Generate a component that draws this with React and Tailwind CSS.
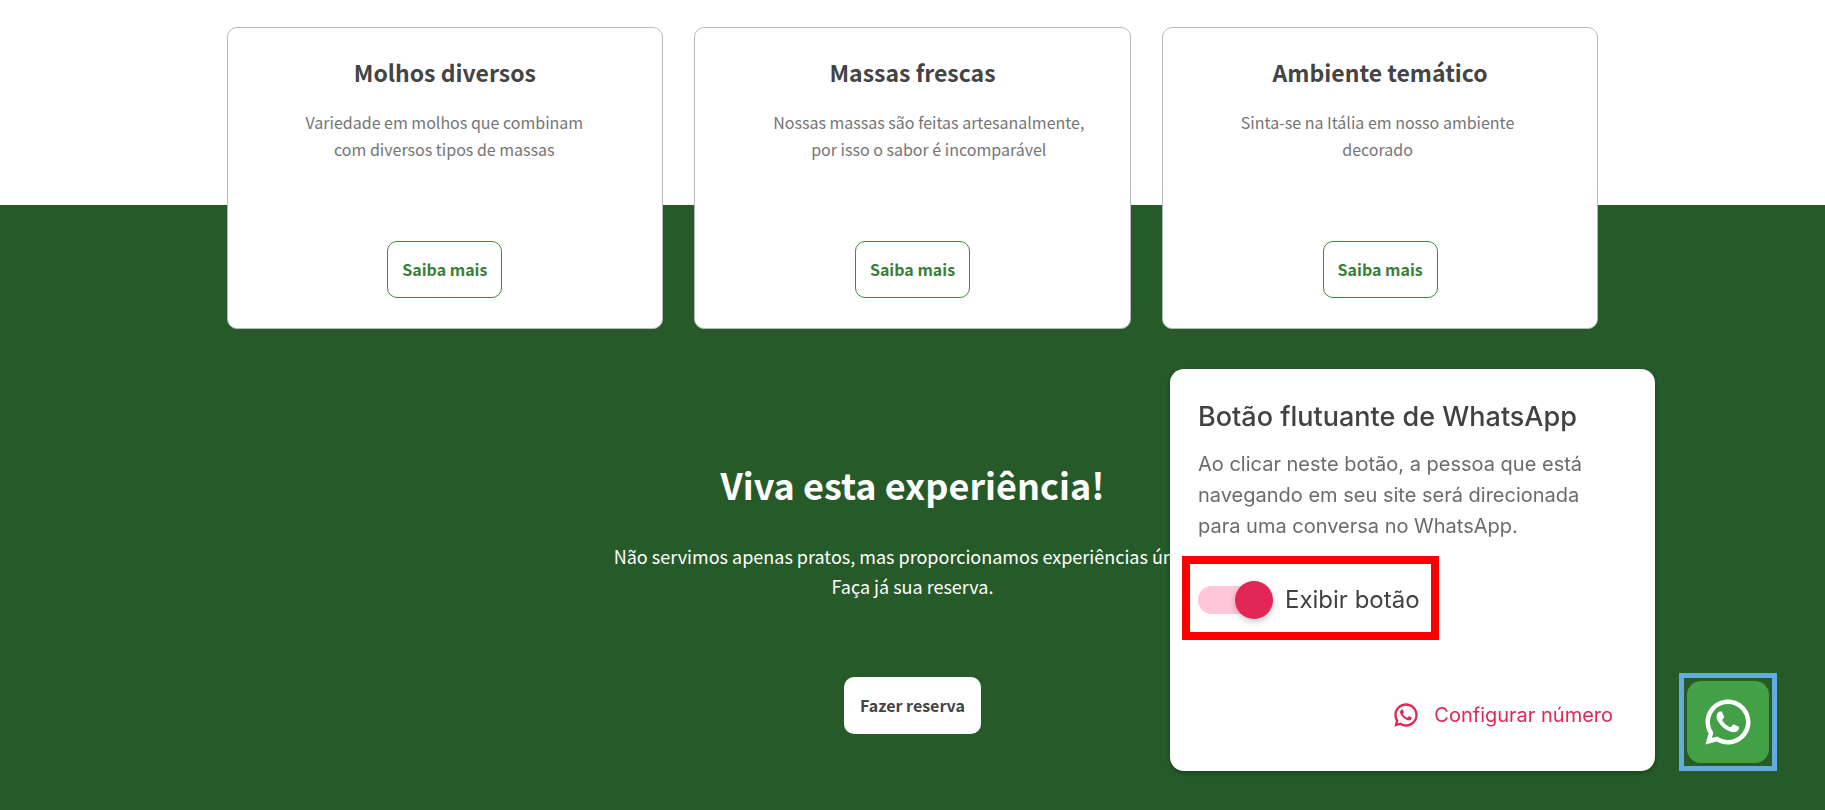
import React, { useState } from "react";
import { RiWhatsappLine } from "react-icons/ri";

const features = [
  { title: "Molhos diversos", lines: ["Variedade em molhos que combinam", "com diversos tipos de massas"] },
  { title: "Massas frescas", lines: ["Nossas massas são feitas artesanalmente,", "por isso o sabor é incomparável"] },
  { title: "Ambiente temático", lines: ["Sinta-se na Itália em nosso ambiente", "decorado"] },
];

function FeatureCard({ title, lines }) {
  return (
    <article className="flex flex-col items-center rounded-[10px] border border-[#b9b9c0] bg-white pt-[26px] pb-[30px]">
      <h3 className="text-[23px] leading-9 font-bold text-[#444]">{title}</h3>
      <div className="mt-[19px] w-full pl-[78px]">
        <p className="w-fit text-center text-base leading-[27px] text-[#757575]">
          {lines[0]}
          <br />
          {lines[1]}
        </p>
      </div>
      <button type="button" className="mt-[78px] rounded-[10px] border border-[#388e3c] px-[14px] py-4 text-base leading-[23px] font-bold text-[#388038]">
        Saiba mais
      </button>
    </article>
  );
}

function WhatsAppPanel() {
  const [visible, setVisible] = useState(true);
  return (
    <section className="w-[485px] rounded-[14px] bg-white px-7 pt-[30px] pb-[41px] font-['Inter',sans-serif] shadow-[0_2px_5px_rgba(0,0,0,0.3)]">
      <h2 className="text-[27px] leading-9 font-medium text-[#424242]">Botão flutuante de WhatsApp</h2>
      <p className="mt-[14px] text-xl leading-[31px] text-[#6b6b6b]">
        Ao clicar neste botão, a pessoa que está navegando em seu site será direcionada para uma conversa no WhatsApp.
      </p>
      <label className="mt-[14px] -ml-4 flex h-[84px] w-[257px] cursor-pointer items-center gap-3 border-8 border-[#ff0000] pt-1 pl-2 text-2xl text-[#424242]">
        <span className="relative flex h-[38px] w-[75px] items-center">
          <input
            type="checkbox"
            role="switch"
            checked={visible}
            onChange={(e) => setVisible(e.target.checked)}
            className="peer h-7 w-[70px] cursor-pointer appearance-none rounded-full bg-gray-300 checked:bg-[#ffc7d9]"
          />
          <span className="pointer-events-none absolute left-0 size-[38px] rounded-full bg-gray-500 shadow-[0_3px_6px_rgba(0,0,0,0.2)] peer-checked:left-[37px] peer-checked:bg-[#e22655]" />
        </span>
        Exibir botão
      </label>
      <div className="mt-[60px] flex justify-end pr-[14px]">
        <a href="#configurar" className="flex items-center gap-[14px] text-xl leading-[30px] text-[#e22655]">
          <RiWhatsappLine className="size-7" aria-hidden="true" />
          Configurar número
        </a>
      </div>
    </section>
  );
}

export default function App() {
  return (
    <main className="min-h-screen bg-[linear-gradient(#fff_205px,#265b29_205px)] pt-[27px] font-['Noto_Sans_CJK_SC',sans-serif]">
      <div className="mx-auto grid max-w-[1372px] grid-cols-3 gap-[31px]">
        {features.map((f) => (
          <FeatureCard key={f.title} {...f} />
        ))}
      </div>
      <section className="flex flex-col items-center pt-[129px] pb-[73px] text-center text-white">
        <h2 className="text-4xl leading-[52px] font-bold">Viva esta experiência!</h2>
        <p className="mt-[31px] text-lg leading-[30px]">
          Não servimos apenas pratos, mas proporcionamos experiências únicas.
          <br />
          Faça já sua reserva.
        </p>
        <button type="button" className="mt-[76px] rounded-[10px] bg-white px-4 py-[17px] text-base leading-[23px] font-bold text-[#444]">
          Fazer reserva
        </button>
      </section>
      <aside className="fixed right-12 bottom-[39px] flex items-end gap-6">
        <WhatsAppPanel />
        <div className="border-[5px] border-[#64abe0] p-[3px]">
          <a href="#whatsapp" aria-label="Abrir conversa no WhatsApp" className="flex size-[82px] items-center justify-center rounded-[14px] bg-[#43a047] text-white">
            <RiWhatsappLine className="size-[54px]" aria-hidden="true" />
          </a>
        </div>
      </aside>
    </main>
  );
}
